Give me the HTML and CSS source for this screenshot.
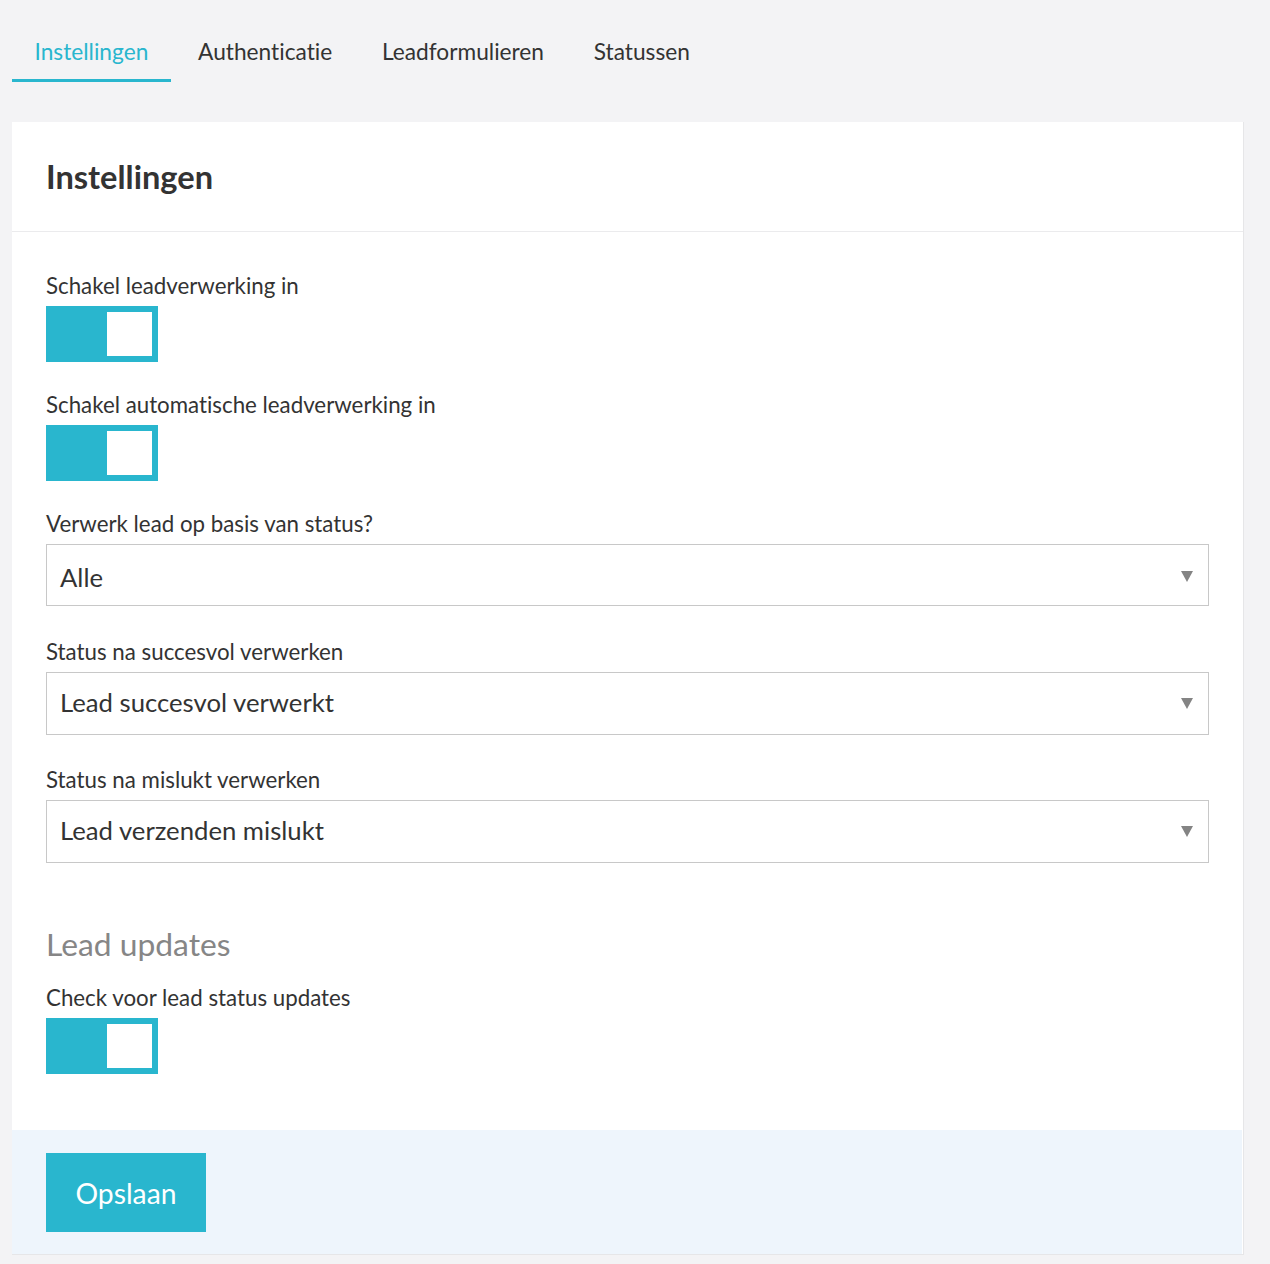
FILE: index.html
```html
<!DOCTYPE html>
<html lang="nl">
<head>
<meta charset="utf-8">
<title>Instellingen</title>
<link rel="stylesheet" href="styles.css">
</head>
<body>
<nav class="tabs">
  <a class="tab active">Instellingen</a>
  <a class="tab">Authenticatie</a>
  <a class="tab">Leadformulieren</a>
  <a class="tab">Statussen</a>
</nav>
<main class="card">
  <header class="card-head"><h1>Instellingen</h1></header>
  <div class="card-body">
    <div class="field">
      <div class="label">Schakel leadverwerking in</div>
      <div class="toggle"><span class="knob"></span></div>
    </div>
    <div class="field">
      <div class="label">Schakel automatische leadverwerking in</div>
      <div class="toggle"><span class="knob"></span></div>
    </div>
    <div class="field field-first">
      <div class="label">Verwerk lead op basis van status?</div>
      <div class="select first"><span class="value">Alle</span><svg class="arrow" viewBox="0 0 12 11"><path d="M0 0H12L6 11Z"/></svg></div>
    </div>
    <div class="field field-select">
      <div class="label">Status na succesvol verwerken</div>
      <div class="select"><span class="value">Lead succesvol verwerkt</span><svg class="arrow" viewBox="0 0 12 11"><path d="M0 0H12L6 11Z"/></svg></div>
    </div>
    <div class="field field-select">
      <div class="label">Status na mislukt verwerken</div>
      <div class="select"><span class="value">Lead verzenden mislukt</span><svg class="arrow" viewBox="0 0 12 11"><path d="M0 0H12L6 11Z"/></svg></div>
    </div>
    <h2>Lead updates</h2>
    <div class="field">
      <div class="label">Check voor lead status updates</div>
      <div class="toggle"><span class="knob"></span></div>
    </div>
  </div>
  <footer class="card-foot"><button class="save">Opslaan</button></footer>
</main>
</body>
</html>
```
FILE: styles.css
```css
* { box-sizing: border-box; }
html, body { margin: 0; padding: 0; }
body {
  background: #f3f3f5;
  font-family: Lato, "Open Sans", sans-serif;
  font-variant-ligatures: none;
  color: #333;
  height: 1264px;
  overflow: hidden;
  padding: 24px 26px 0 12px;
}
.tabs { display: flex; gap: 4.8px; height: 58px; }
.tab {
  font-size: 22.7px;
  line-height: 55px;
  height: 58px;
  padding: 0 22.5px;
  color: #333;
}
.tab.active { color: #29b6ce; border-bottom: 3px solid #29b6ce; }
.card {
  margin-top: 40px;
  background: #fff;
  border-right: 1px solid #e6e6e8;
  border-bottom: 1px solid #e6e6e8;
  height: 1133px;
  display: flex;
  flex-direction: column;
}
.card-head {
  height: 110px;
  border-bottom: 1px solid #ebebed;
  padding: 0 34px;
  display: flex;
  align-items: center;
}
h1 { margin: 0; font-size: 32.6px; font-weight: 700; color: #333; }
.card-body { flex: 1; padding: 41px 34px 0; }
.field { margin-bottom: 30px; }
.field-first { margin-bottom: 33px; }
.field-select { margin-bottom: 32px; }
.label { font-size: 22.3px; line-height: 26px; height: 33px; color: #333; }
.toggle {
  width: 112px;
  height: 56px;
  background: #29b6ce;
  padding: 6px;
  display: flex;
  justify-content: flex-end;
}
.knob { width: 45px; height: 44px; background: #fff; }
.select {
  height: 63px;
  width: 1163px;
  border: 1px solid #c8c8c8;
  display: flex;
  align-items: center;
  justify-content: space-between;
  padding: 0 15px 4px 13px;
}
.select.first { height: 62px; padding-top: 3px; padding-bottom: 0; }
.value { font-size: 25.7px; color: #333; }
.arrow { width: 12px; height: 11px; margin-top: 4px; fill: #848484; }
.select.first .arrow { margin-top: -1px; }
h2 {
  margin: 63px 0 23px;
  font-size: 31.8px;
  line-height: 36px;
  font-weight: 400;
  color: #868686;
}
.card-foot {
  height: 124px;
  border-right: 1px solid #fff;
  background: #eef5fc;
  padding: 23px 34px;
}
.save {
  display: block;
  width: 160px;
  height: 79px;
  border: 0;
  background: #29b6ce;
  color: #fff;
  font: 400 28.3px Lato, "Open Sans", sans-serif;
}
```
